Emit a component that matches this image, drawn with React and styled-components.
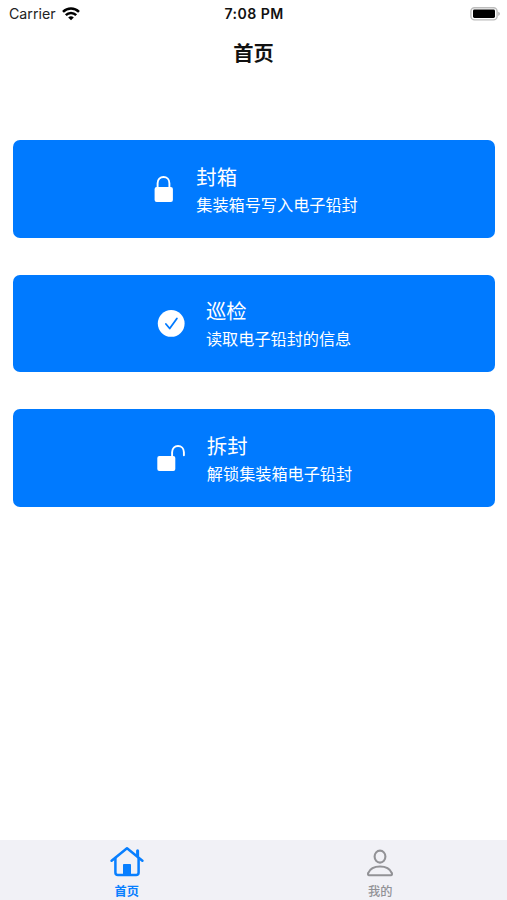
import React from "react";
import styled, { createGlobalStyle } from "styled-components";

const GlobalStyle = createGlobalStyle`
  * { box-sizing: border-box; }
  body { margin: 0; background: #fff; }
`;

const Screen = styled.div`
  width: 100%;
  height: 100vh;
  display: flex;
  flex-direction: column;
  overflow: hidden;
  background: #fff;
  font-family: Inter, "Noto Sans CJK SC", sans-serif;
`;

const StatusBar = styled.header`
  display: grid;
  grid-template-columns: 1fr auto 1fr;
  align-items: center;
  height: 27px;
  padding: 0 7px 0 9px;
  color: #111;
`;

const Carrier = styled.div`
  display: flex;
  align-items: center;
  gap: 6px;
  font-size: 14.2px;
  line-height: 27px;
  color: #222;
`;

const Clock = styled.time`
  margin-right: 1px;
  font-size: 14.1px;
  font-weight: 600;
  letter-spacing: 0.45px;
`;

const BatterySlot = styled.div`
  display: flex;
  justify-content: flex-end;
`;

const PageTitle = styled.h1`
  margin: 0;
  height: 51px;
  line-height: 53px;
  text-align: center;
  font-size: 20.3px;
  font-weight: 700;
  color: #111;
`;

const Actions = styled.main`
  flex: 1;
  display: flex;
  flex-direction: column;
  gap: 36.8px;
  padding: 62.3px 12.5px 0 13px;
`;

const ActionCard = styled.button`
  display: flex;
  justify-content: center;
  align-items: center;
  gap: 21.5px;
  width: 100%;
  height: 97.6px;
  padding: 0 0 0 ${(p) => p.$shift}px;
  border: 0;
  border-radius: 7px;
  background: #007aff;
  color: #fff;
  font-family: inherit;
`;

const IconSlot = styled.span`
  display: flex;
  width: ${(p) => p.$width}px;

  svg {
    flex-shrink: 0;
  }
`;

const ActionText = styled.span`
  display: flex;
  flex-direction: column;
  padding-top: 4.4px;
  text-align: left;
  white-space: nowrap;
`;

const ActionName = styled.span`
  font-size: 20.4px;
  line-height: 28px;
`;

const ActionHint = styled.span`
  font-size: 16.15px;
  line-height: 27px;
`;

const TabBar = styled.nav`
  display: grid;
  grid-template-columns: 1fr 1fr;
  height: 60px;
  background: #f1f1f6;
`;

const Tab = styled.a`
  display: flex;
  flex-direction: column;
  align-items: center;
  padding-top: 5px;
  color: ${(p) => (p.$active ? "#087fff" : "#929296")};
  font-size: 12.2px;
  font-weight: ${(p) => (p.$active ? 700 : 500)};
  line-height: 17px;
`;

const TabIcon = styled.svg`
  display: block;
  width: 34px;
  height: 34px;
  margin-bottom: 4px;
  fill: none;
  stroke: currentColor;
`;

const WifiIcon = () => (
  <svg width="18" height="14" viewBox="0 0 18 14" fill="none" stroke="#000" strokeWidth="2.5">
    <path d="M1 4.8C5.5 .4 12.5 .4 17 4.8" />
    <path d="M3.8 8.1C6.7 5.2 11.3 5.2 14.2 8.1" />
    <path d="M6.2 10.4Q9 8.1 11.8 10.4L9 13.3Z" fill="#000" stroke="none" />
  </svg>
);

const BatteryIcon = () => (
  <svg width="30" height="14" viewBox="0 0 30 14">
    <rect x=".9" y=".7" width="26.2" height="12.2" rx="3.6" fill="#fff" stroke="#bcbcbc" strokeWidth="1.4" />
    <rect x="3" y="2.5" width="22" height="8.5" rx="1.4" fill="#000" />
    <path d="M28.3 4.7Q29.8 5.4 29.8 6.8T28.3 8.9Z" fill="#aaa" />
  </svg>
);

const LockIcon = () => (
  <svg width="25" height="28" viewBox="0 0 25 28">
    <path d="M7.6 13V8.2C7.6 4.4 10.2 2 13.5 2S19.4 4.4 19.4 8.2V13" fill="none" stroke="#fff" strokeWidth="1.9" />
    <rect x="4.6" y="12" width="18.3" height="15" rx="2" fill="#fff" />
  </svg>
);

const CheckIcon = () => (
  <svg width="28" height="28" viewBox="0 0 28 28">
    <circle cx="14.2" cy="14.4" r="13.4" fill="#fff" />
    <path d="M8.9 15L12.7 19.5L19.9 9.4" fill="none" stroke="#007aff" strokeWidth="1.8" strokeLinecap="round" strokeLinejoin="round" />
  </svg>
);

const UnlockIcon = () => (
  <svg width="28" height="28" viewBox="0 0 28 28">
    <path d="M15.1 13V8.2C15.1 4.3 17.8 2 21 2S26.9 4.3 26.9 8.2V11.2" fill="none" stroke="#fff" strokeWidth="1.9" strokeLinecap="round" />
    <rect x=".3" y="12" width="18" height="15" rx="2" fill="#fff" />
  </svg>
);

const HomeIcon = () => (
  <TabIcon viewBox="0 0 34 34" strokeWidth="2.5" strokeLinecap="round" strokeLinejoin="round">
    <path d="M1.6 15.7L17 3.3L32.4 15.7" />
    <path d="M5.4 13V27.5Q5.4 30 7.9 30H26.1Q28.6 30 28.6 27.5V13" />
    <path d="M27.6 10.7V5.8" strokeWidth="3" />
    <path d="M13.5 30V19.5H20.5V30Z" fill="currentColor" strokeWidth="1" />
  </TabIcon>
);

const ProfileIcon = () => (
  <TabIcon viewBox="0 0 34 34" strokeWidth="2.1" strokeLinejoin="round">
    <ellipse cx="17" cy="11.6" rx="5.4" ry="6" />
    <path d="M5.8 30.2C4.9 30.2 4.8 28.9 5.3 27.8C7 23.8 11.3 21.5 17 21.5S27 23.8 28.7 27.8C29.2 28.9 29.1 30.2 28.2 30.2Z" />
  </TabIcon>
);

const ACTIONS = [
  { name: "封箱", hint: "集装箱号写入电子铅封", Icon: LockIcon, width: 25, shift: 0 },
  { name: "巡检", hint: "读取电子铅封的信息", Icon: CheckIcon, width: 27, shift: 1.2 },
  { name: "拆封", hint: "解锁集装箱电子铅封", Icon: UnlockIcon, width: 28, shift: 2 },
];

export default function App() {
  return (
    <Screen>
      <GlobalStyle />
      <StatusBar>
        <Carrier>
          Carrier
          <WifiIcon />
        </Carrier>
        <Clock>7:08 PM</Clock>
        <BatterySlot>
          <BatteryIcon />
        </BatterySlot>
      </StatusBar>
      <PageTitle>首页</PageTitle>
      <Actions>
        {ACTIONS.map(({ name, hint, Icon, width, shift }) => (
          <ActionCard key={name} $shift={shift}>
            <IconSlot $width={width}>
              <Icon />
            </IconSlot>
            <ActionText>
              <ActionName>{name}</ActionName>
              <ActionHint>{hint}</ActionHint>
            </ActionText>
          </ActionCard>
        ))}
      </Actions>
      <TabBar>
        <Tab $active>
          <HomeIcon />
          首页
        </Tab>
        <Tab>
          <ProfileIcon />
          我的
        </Tab>
      </TabBar>
    </Screen>
  );
}
